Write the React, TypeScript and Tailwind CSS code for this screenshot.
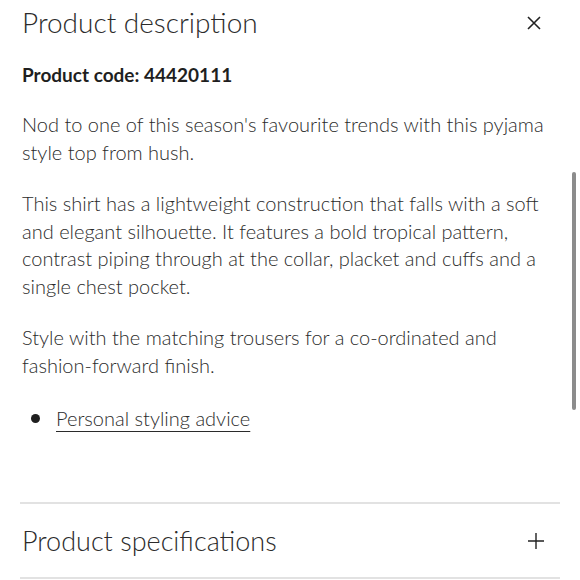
export default function App() {
  return (
    <div className="relative h-[580px] w-[580px] overflow-hidden bg-white text-[#2b2b2b] font-['Lato',sans-serif]">
      <div className="pl-[22px] pr-[22px]">
        <div className="flex items-center justify-between pt-[4px]">
          <h2 className="text-[28px] font-light leading-[36px]">Product description</h2>
          <svg width="14" height="14" viewBox="0 0 14 14" className="mr-[17px] mt-[2px]">
            <path d="M1 1L13 13M13 1L1 13" stroke="#222" strokeWidth="1.6" />
          </svg>
        </div>
        <p className="mt-[22px] text-[19px] font-bold leading-[26px] text-[#1f1f1f]">Product code: 44420111</p>
        <div className="mt-[23px] text-[20px] font-light leading-[27.5px]">
          <p>
            Nod to one of this season's favourite trends with this pyjama
            <br />
            style top from hush.
          </p>
          <p className="mt-[24px]">
            This shirt has a lightweight construction that falls with a soft
            <br />
            and elegant silhouette. It features a bold tropical pattern,
            <br />
            contrast piping through at the collar, placket and cuffs and a
            <br />
            single chest pocket.
          </p>
          <p className="mt-[24px]">
            Style with the matching trousers for a co-ordinated and
            <br />
            fashion-forward finish.
          </p>
          <ul className="mt-[26px] flex items-center gap-[16px] pl-[9px]">
            <li className="h-[9px] w-[9px] rounded-full bg-[#1f1f1f]" />
            <li className="underline underline-offset-[5px] decoration-1">Personal styling advice</li>
          </ul>
        </div>
      </div>
      <div className="mx-[20px] mt-[69px] border-t-2 border-[#e2e2e2]">
        <div className="flex items-center justify-between pb-[18px] pl-[2px] pr-[16px] pt-[19px]">
          <span className="text-[27px] font-light leading-[36px]">Product specifications</span>
          <svg width="16" height="16" viewBox="0 0 16 16">
            <path d="M8 0V16M0 8H16" stroke="#222" strokeWidth="1.4" />
          </svg>
        </div>
        <div className="border-t-2 border-[#e2e2e2]" />
      </div>
      <div className="absolute right-[4px] top-[172px] h-[238px] w-[4px] rounded-full bg-[#8c8c8c]" />
    </div>
  );
}
